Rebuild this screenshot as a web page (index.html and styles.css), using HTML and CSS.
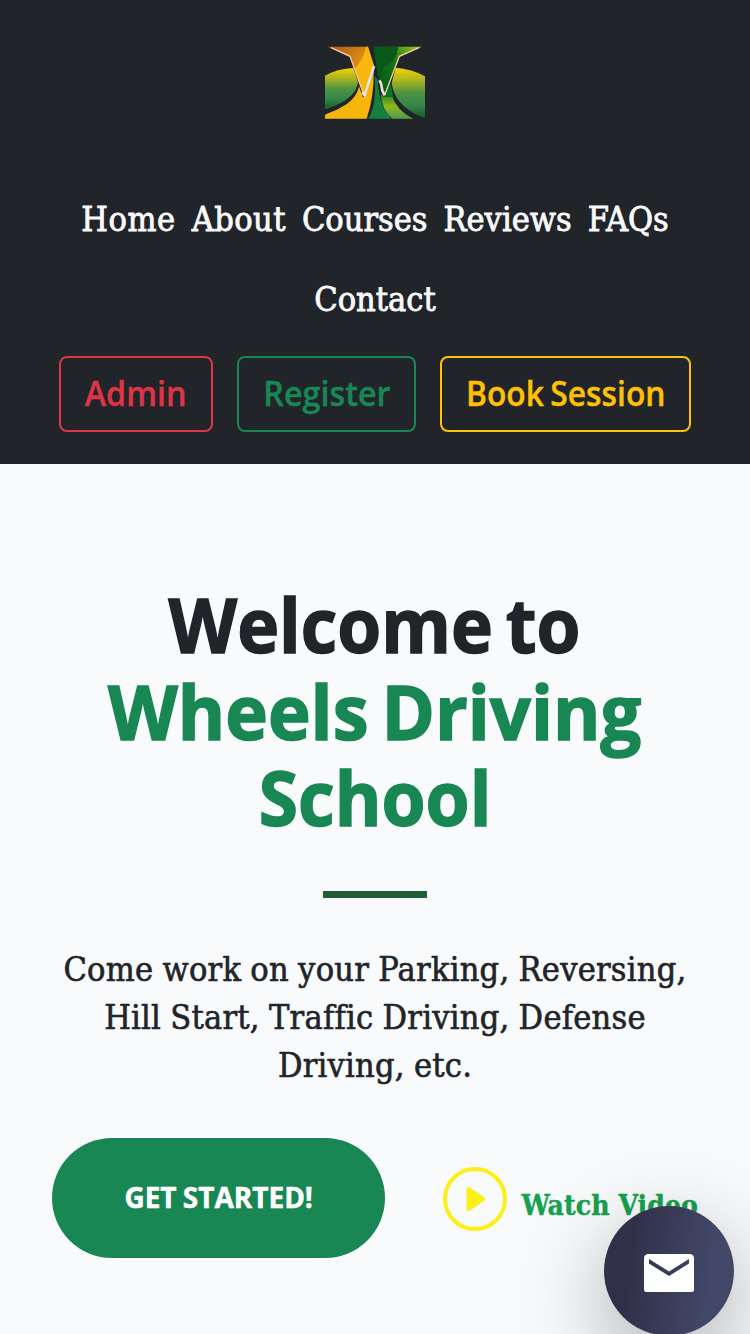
FILE: index.html
```html
<!DOCTYPE html>
<html lang="en">
<head>
<meta charset="utf-8">
<title>Wheels Driving School</title>
<link rel="stylesheet" href="styles.css">
</head>
<body>
<header class="header">
  <a class="logo" href="#" aria-label="Wheels Driving School">
    <svg width="100" height="73" viewBox="30 31 300 219">
      <defs>
        <linearGradient id="field" x1="0" y1="0" x2="0" y2="1">
          <stop offset="0" stop-color="#f4d400"/><stop offset=".22" stop-color="#b5b81c"/><stop offset=".5" stop-color="#4f9440"/><stop offset=".75" stop-color="#34864a"/><stop offset="1" stop-color="#155b29"/>
        </linearGradient>
        <linearGradient id="gold" x1="0" y1="0" x2="1" y2="1">
          <stop offset="0" stop-color="#a9541c"/><stop offset=".45" stop-color="#d98613"/><stop offset="1" stop-color="#ffc30d"/>
        </linearGradient>
        <linearGradient id="leaf" x1="0" y1="1" x2="1" y2="0">
          <stop offset="0" stop-color="#045413"/><stop offset=".55" stop-color="#147018"/><stop offset="1" stop-color="#a6c91b"/>
        </linearGradient>
        <linearGradient id="road" x1="0" y1="0" x2="1" y2="0">
          <stop offset="0" stop-color="#f2b512"/><stop offset="1" stop-color="#f8b506"/>
        </linearGradient>
        <linearGradient id="lime" x1="0" y1="0" x2="0" y2="1">
          <stop offset="0" stop-color="#1b7c20"/><stop offset=".5" stop-color="#8fb91c"/><stop offset="1" stop-color="#4f9b52"/>
        </linearGradient>
      </defs>
      <path fill="url(#field)" d="M30 120Q68 99 115 97L129 138C124 178 88 202 30 221Z"/>
      <path fill="url(#field)" d="M330 122Q290 99 242 96L230 142C236 190 272 228 330 247Z"/>
      <path fill="url(#road)" d="M30 249V237C84 217 122 196 132 152L144 184H151L176 105Q178 180 155 249Z"/>
      <path fill="#147f3e" d="M180 120C181 180 181 211 160 249H229C205 224 192 192 188 134Z"/>
      <path fill="url(#lime)" d="M197 174L207 184L231 180Q246 225 294 249H232Q200 222 197 174Z"/>
      <path fill="#08752b" d="M207 183L226 139L235 185Z"/>
      <path fill="url(#gold)" d="M38 33H159L177 91L148 180L106 63Z"/>
      <path fill="#f9b60c" d="M159 33L177 91L148 180L119 99Q145 72 153 33Z"/>
      <path fill="url(#leaf)" d="M176 33H321L254 63L208 180L191 135Z"/>
      <path fill="#08591a" d="M176 33H249Q248 75 207 93L192 136Z"/>
      <path fill="none" stroke="#f0cfa0" stroke-width="4" d="M48 36L105 62L147 179M312 36L253 62L209 178"/>
      <path fill="none" stroke="#e9e3df" stroke-width="8" d="M142 170L149 179L177 91M193 134L198 143L202 165L209 179"/>
    </svg>
  </a>
  <nav class="nav">
    <a class="nav-link spaced" href="#">Home</a>
    <a class="nav-link spaced-tight" href="#">About</a>
    <a class="nav-link" href="#">Courses</a>
    <a class="nav-link" href="#">Reviews</a>
    <a class="nav-link" href="#">FAQs</a>
    <a class="nav-link" href="#">Contact</a>
  </nav>
  <div class="actions">
    <a class="btn btn-admin" href="#"><span class="cond">Admin</span></a>
    <a class="btn btn-register" href="#"><span class="cond">Register</span></a>
    <a class="btn btn-book" href="#"><span class="cond cond-book">Book Session</span></a>
  </div>
</header>
<main class="hero">
  <h1 class="title">
    <span class="line line-1">Welcome to</span>
    <span class="line line-2">Wheels Driving</span>
    <span class="line line-3">School</span>
  </h1>
  <div class="divider"></div>
  <p class="lead">Come work on your Parking, Reversing,<br>Hill Start, Traffic Driving, Defense<br>Driving, etc.</p>
  <div class="cta">
    <a class="start" href="#"><span class="start-text">GET STARTED!</span></a>
    <a class="watch" href="#">
      <svg width="66" height="66" viewBox="0 0 66 66">
        <circle cx="33" cy="33" r="30" fill="none" stroke="#fcf016" stroke-width="4"/>
        <path d="M26.500 23L41 33L26.500 43Z" fill="#fcf016" stroke="#fcf016" stroke-width="4" stroke-linejoin="round"/>
      </svg>
      <span class="watch-text">Watch Video</span>
    </a>
  </div>
</main>
<a class="mail" href="#" aria-label="Send a message">
  <svg width="50" height="38" viewBox="0 0 50 38">
    <path fill="#fff" fill-rule="evenodd" d="M4.500 0H45.500Q50 0 50 4.500V35.500Q50 38 47.500 38H2.500Q0 38 0 35.500V4.500Q0 0 4.500 0ZM5 5V9.500L25 22L45 9.500V5L25 17.500Z"/>
  </svg>
</a>
</body>
</html>
```
FILE: styles.css
```css
* { box-sizing: border-box; }
html, body { height: 100%; }
body {
  margin: 0;
  overflow: hidden;
  background: #f8fafc;
  color: #212429;
  font-family: "DejaVu Serif Condensed", "DejaVu Serif", serif;
}
a { color: inherit; text-decoration: none; }
svg { display: block; }

.header {
  height: 464px;
  padding-top: 46px;
  background: #212429;
  display: flex;
  flex-direction: column;
  align-items: center;
}
.logo { height: 73px; }
.nav {
  margin-top: 60px;
  width: 600px;
  display: flex;
  flex-wrap: wrap;
  justify-content: center;
  column-gap: 16px;
}
.nav-link {
  color: #f8f9fa;
  font-size: 34px;
  line-height: 80px;
  -webkit-text-stroke: 0.8px currentColor;
}
.spaced { letter-spacing: 0.6px; }
.spaced-tight { letter-spacing: 0.4px; }

.actions {
  margin-top: 17px;
  display: flex;
  gap: 24px;
}
.btn {
  height: 76px;
  border: 2px solid currentColor;
  border-radius: 8px;
  font: 600 34px/70px "Open Sans", "Noto Sans", sans-serif;
  display: flex;
  justify-content: center;
  white-space: nowrap;
  -webkit-text-stroke: 0.4px currentColor;
}
.btn-admin { width: 154px; color: #dc3546; }
.btn-register { width: 179px; color: #198754; }
.btn-book { width: 251px; color: #ffc008; }
.cond { transform: scaleX(0.95); }
.cond-book { transform: scaleX(0.935); word-spacing: -2px; }

.hero {
  padding-top: 117px;
  display: flex;
  flex-direction: column;
  align-items: center;
}
.title {
  margin: 0;
  display: flex;
  flex-direction: column;
  align-items: center;
  font: 700 76px/86.500px "Open Sans", "Noto Sans", sans-serif;
  white-space: nowrap;
  word-spacing: -6px;
  -webkit-text-stroke: 1.5px currentColor;
}
.line-1 { transform: scaleX(0.934); }
.line-2 { transform: scaleX(0.95); color: #198754; }
.line-3 { transform: scaleX(0.937); color: #198754; }
.divider {
  width: 104px;
  height: 7px;
  margin-top: 50px;
  background: #205c34;
}
.lead {
  margin: 47px 0 0;
  font-size: 34px;
  line-height: 48px;
  letter-spacing: 0.24px;
  word-spacing: -0.8px;
  text-align: center;
  white-space: nowrap;
  -webkit-text-stroke: 0.6px currentColor;
}
.cta {
  width: 646px;
  margin-top: 49px;
  display: flex;
  justify-content: space-between;
  align-items: center;
}
.start {
  width: 333px;
  height: 120px;
  border-radius: 60px;
  background: #198754;
  color: #fff;
  font: 700 29px/118px "Open Sans", "Noto Sans", sans-serif;
  display: flex;
  justify-content: center;
  white-space: nowrap;
  -webkit-text-stroke: 0.5px currentColor;
}
.start-text { transform: scaleX(0.965); word-spacing: -1px; }
.watch {
  display: flex;
  align-items: center;
  gap: 14px;
  margin-top: 2px;
}
.watch-text {
  padding-top: 14px;
  color: #14a250;
  font-size: 28px;
  font-weight: 700;
  letter-spacing: 0.1px;
  line-height: 36px;
  white-space: nowrap;
  -webkit-text-stroke: 0.4px currentColor;
}
.mail {
  position: absolute;
  left: 604px;
  top: 1206px;
  width: 130px;
  height: 130px;
  border-radius: 50%;
  background: linear-gradient(97deg, #303049 22%, #434868 80%);
  box-shadow: 0 28px 90px rgba(0, 0, 0, 0.32);
  display: flex;
  align-items: center;
  justify-content: center;
  padding-top: 4px;
}
```
